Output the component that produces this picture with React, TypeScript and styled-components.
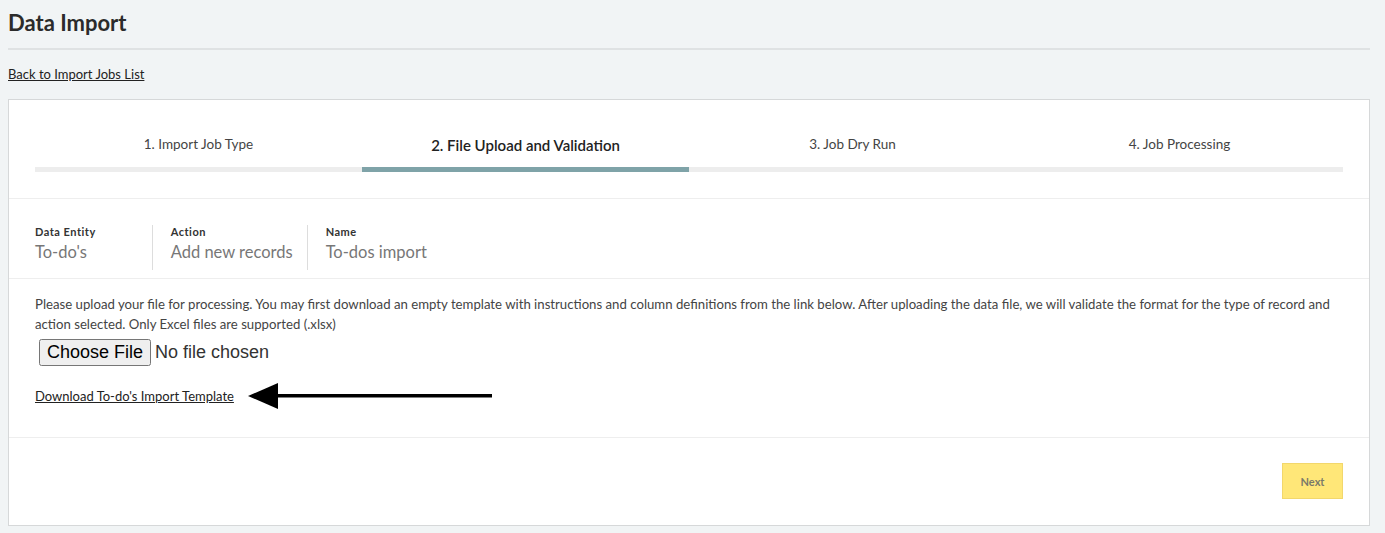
import React from "react";
import styled, { createGlobalStyle } from "styled-components";

const Global = createGlobalStyle`
  html, body { margin: 0; background: #f1f4f5; }
  body { font-family: Lato, "Open Sans", sans-serif; color: #333; }
`;

const Page = styled.div`
  padding: 0 15px 20px 8px;
`;
const Title = styled.h1`
  margin: 0;
  padding: 9px 0 12px;
  font-size: 22px;
  font-weight: 700;
  color: #2b2b2b;
  border-bottom: 2px solid #dfe2e3;
`;
const BackLink = styled.a`
  display: inline-block;
  margin: 16px 0 17px;
  font-size: 13px;
  color: #222;
  text-decoration: underline;
`;
const Card = styled.div`
  background: #fff;
  border: 1px solid #d6d8d9;
`;
const Steps = styled.div`
  display: grid;
  grid-template-columns: repeat(4, 1fr);
  margin: 0 26px;
  padding-top: 36px;
`;
const Step = styled.div<{ $active?: boolean }>`
  text-align: center;
  font-size: ${p => (p.$active ? "15px" : "13.5px")};
  font-weight: ${p => (p.$active ? 600 : 400)};
  color: ${p => (p.$active ? "#222" : "#444")};
  padding-bottom: 13px;
  border-bottom: 5px solid ${p => (p.$active ? "#7fa3a8" : "#ededed")};
`;
const Section = styled.div<{ $border?: boolean }>`
  border-top: ${p => (p.$border ? "1px solid #eeeeee" : "none")};
`;
const StepsWrap = styled(Section)`
  padding-bottom: 26px;
`;
const Meta = styled.div`
  display: flex;
  padding: 26px 26px 8px;
`;
const MetaItem = styled.div<{ $first?: boolean }>`
  padding: 0 ${p => (p.$first ? "56px" : "18px")} 8px ${p => (p.$first ? "0" : "18px")};
  border-left: ${p => (p.$first ? "none" : "1px solid #ddd")};
  &:nth-child(2) { padding-right: 14px; }
`;
const MetaLabel = styled.div`
  font-size: 11px;
  font-weight: 700;
  letter-spacing: 0.5px;
  color: #333;
  margin-bottom: 4px;
`;
const MetaValue = styled.div`
  font-size: 16.5px;
  color: #777;
`;
const Body = styled.div`
  padding: 15px 26px 26px;
`;
const Para = styled.p`
  margin: 0;
  font-size: 13.2px;
  line-height: 20px;
  color: #444;
`;
const FileRow = styled.div`
  margin: 5px 0 0 4px;
  input { font-family: "Liberation Sans", Arial, sans-serif; font-size: 18px; color: #333; }
`;
const DownloadRow = styled.div`
  display: flex;
  align-items: center;
  gap: 12px;
  margin-top: 15px;
`;
const DlLink = styled.a`
  font-size: 13px;
  color: #222;
  text-decoration: underline;
`;
const Footer = styled(Section)`
  display: flex;
  justify-content: flex-end;
  padding: 25px 26px 26px;
`;
const NextBtn = styled.button`
  width: 61px;
  height: 36px;
  background: #ffe778;
  border: 1px solid #f2d76c;
  font-family: Lato, sans-serif;
  font-size: 11px;
  font-weight: 700;
  color: #7a7a6a;
`;

export default function App() {
  return (
    <Page>
      <Global />
      <Title>Data Import</Title>
      <BackLink href="#">Back to Import Jobs List</BackLink>
      <Card>
        <StepsWrap>
          <Steps>
            <Step>1. Import Job Type</Step>
            <Step $active>2. File Upload and Validation</Step>
            <Step>3. Job Dry Run</Step>
            <Step>4. Job Processing</Step>
          </Steps>
        </StepsWrap>
        <Section $border>
          <Meta>
            <MetaItem $first>
              <MetaLabel>Data Entity</MetaLabel>
              <MetaValue>To-do's</MetaValue>
            </MetaItem>
            <MetaItem>
              <MetaLabel>Action</MetaLabel>
              <MetaValue>Add new records</MetaValue>
            </MetaItem>
            <MetaItem>
              <MetaLabel>Name</MetaLabel>
              <MetaValue>To-dos import</MetaValue>
            </MetaItem>
          </Meta>
        </Section>
        <Section $border>
          <Body>
            <Para>
              Please upload your file for processing. You may first download an empty template with instructions and column definitions from the link below. After uploading the data file, we will validate the format for the type of record and action selected. Only Excel files are supported (.xlsx)
            </Para>
            <FileRow>
              <input type="file" accept=".xlsx" />
            </FileRow>
            <DownloadRow>
              <DlLink href="#">Download To-do's Import Template</DlLink>
              <svg width="250" height="30" viewBox="0 0 250 30">
                <polygon points="2,15 32,2 32,28" fill="#000" />
                <rect x="30" y="13" width="216" height="3.5" fill="#000" />
              </svg>
            </DownloadRow>
          </Body>
        </Section>
        <Footer $border>
          <NextBtn>Next</NextBtn>
        </Footer>
      </Card>
    </Page>
  );
}
